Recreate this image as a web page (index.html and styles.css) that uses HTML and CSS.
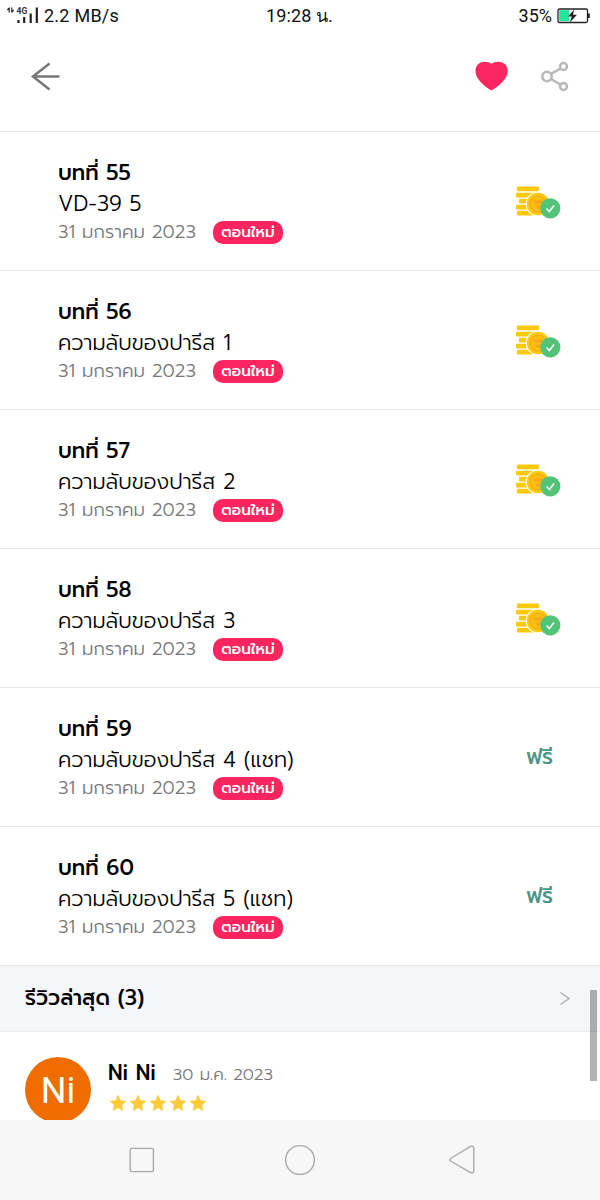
FILE: index.html
```html
<!DOCTYPE html>
<html lang="th">
<head>
  <meta charset="UTF-8" />
  <meta name="viewport" content="width=device-width, initial-scale=1" />
  <title>รายการตอน</title>
  <link rel="stylesheet" href="styles.css">
</head>
<body>
  <!-- Reusable icons -->
  <svg class="sprite" aria-hidden="true">
    <symbol id="coins" viewBox="0 0 46 34">
      <g fill="#fbc90c">
        <rect x="2" y=".5" width="22" height="4.800" rx="1" />
        <rect x="1" y="6.700" width="23" height="4.800" rx="1" />
        <rect x="4" y="12.700" width="20" height="4.800" rx="1" />
        <rect x="1" y="18.700" width="20" height="4.800" rx="1" />
        <rect x="2" y="24.700" width="22" height="4.800" rx="1" />
      </g>
      <circle cx="23" cy="18" r="12.300" fill="#fff" />
      <circle cx="23" cy="18" r="11.200" fill="#fdc90d" />
      <circle cx="23" cy="18" r="8" fill="#fcbf0d" stroke="#f3a712" stroke-width="1.100" />
      <path d="M18 14.500h10l-1.500 3h-7zM20 19.500h6l-3 4z" fill="#f7a51c" />
      <circle cx="35.300" cy="22.300" r="10.100" fill="#52c477" />
      <path d="M31.600 22.500l2.700 3 4.800-6" fill="none" stroke="#fff" stroke-width="1.500" />
    </symbol>
    <symbol id="star" viewBox="0 0 20 20">
      <path d="M10 1.600l2.500 5.700 6 .6-4.500 4.100 1.300 6L10 14.900 4.700 18 6 12 1.500 7.900l6-.6z" fill="#ffca38" />
    </symbol>
  </svg>

  <div class="status-bar">
    <div class="status-left">
      <svg class="signal" width="32" height="18" viewBox="0 0 32 18">
        <path d="M2.200 .5v5M.4 3l1.800-2M4.800 .5v5M6.600 3l-1.800 2" fill="none" stroke="#222" stroke-width="1.200" />
        <text x="9.500" y="7">4G</text>
        <path d="M11.500 13v3M17.200 10v6M23.700 6.500v9.500M29.800 .5v15.500" stroke="#222" stroke-width="2.200" />
      </svg>
      <span class="speed">2.2 MB/s</span>
    </div>
    <div class="clock">19:28 น.</div>
    <div class="status-right">
      <span class="percent">35%</span>
      <svg width="34" height="16" viewBox="0 0 34 16">
        <rect x="1" y="1" width="29.500" height="13.500" rx="1.500" fill="#fff" stroke="#222" stroke-width="1.300" />
        <rect x="2.200" y="2.200" width="10" height="11" fill="#20e79b" />
        <path d="M31 5.500h1.800v4.500H31z" fill="#222" />
        <path d="M17.200 1.500L11 8.600h3.800l-2 5.800 7.200-7.600h-4z" fill="#222" />
      </svg>
    </div>
  </div>

  <header class="toolbar">
    <svg class="back" width="30" height="30" viewBox="0 0 30 30">
      <path d="M29.500 15.500H3M19.500 2.500L3 15.500l16.500 13" fill="none" stroke="#777" stroke-width="2.500" />
    </svg>
    <svg class="heart" width="34" height="31" viewBox="0 0 34 31">
      <path d="M16.500 29.400C13 27.500.5 19.500.5 10 .5 4.500 4.300.8 9.700.8c3 0 5.300.8 6.800 2.200C18 1.600 20.300.8 23.300.8c5.400 0 9.400 3.700 9.400 9.200C32.700 19.500 20 27.500 16.500 29.400z" fill="#fc255f" />
    </svg>
    <svg class="share" width="30" height="31" viewBox="0 0 30 31">
      <g fill="none" stroke="#b8b8b8" stroke-width="2.500">
        <path d="M11 12.800L20.300 7.600M11 18L20.300 23.500" />
        <circle cx="7" cy="15.500" r="4.700" />
        <circle cx="23.500" cy="5.500" r="3.500" />
        <circle cx="23.500" cy="25.500" r="3.500" />
      </g>
    </svg>
  </header>

  <main class="content">
    <ul class="chapters">
      <li class="chapter">
        <div class="chapter-info">
          <h3>บทที่ 55</h3>
          <p class="name">VD-39 5</p>
          <p class="meta"><span class="date">31 มกราคม 2023</span><span class="badge">ตอนใหม่</span></p>
        </div>
        <svg class="coins"><use href="#coins" /></svg>
      </li>
      <li class="chapter">
        <div class="chapter-info">
          <h3>บทที่ 56</h3>
          <p class="name">ความลับของปารีส 1</p>
          <p class="meta"><span class="date">31 มกราคม 2023</span><span class="badge">ตอนใหม่</span></p>
        </div>
        <svg class="coins"><use href="#coins" /></svg>
      </li>
      <li class="chapter">
        <div class="chapter-info">
          <h3>บทที่ 57</h3>
          <p class="name">ความลับของปารีส 2</p>
          <p class="meta"><span class="date">31 มกราคม 2023</span><span class="badge">ตอนใหม่</span></p>
        </div>
        <svg class="coins"><use href="#coins" /></svg>
      </li>
      <li class="chapter">
        <div class="chapter-info">
          <h3>บทที่ 58</h3>
          <p class="name">ความลับของปารีส 3</p>
          <p class="meta"><span class="date">31 มกราคม 2023</span><span class="badge">ตอนใหม่</span></p>
        </div>
        <svg class="coins"><use href="#coins" /></svg>
      </li>
      <li class="chapter">
        <div class="chapter-info">
          <h3>บทที่ 59</h3>
          <p class="name">ความลับของปารีส 4 (แชท)</p>
          <p class="meta"><span class="date">31 มกราคม 2023</span><span class="badge">ตอนใหม่</span></p>
        </div>
        <span class="free">ฟรี</span>
      </li>
      <li class="chapter">
        <div class="chapter-info">
          <h3>บทที่ 60</h3>
          <p class="name">ความลับของปารีส 5 (แชท)</p>
          <p class="meta"><span class="date">31 มกราคม 2023</span><span class="badge">ตอนใหม่</span></p>
        </div>
        <span class="free">ฟรี</span>
      </li>
    </ul>

    <div class="reviews-head">
      <h2>รีวิวล่าสุด (3)</h2>
      <svg width="12" height="16" viewBox="0 0 12 16">
        <path d="M1.500 1.500l8.500 6-8.500 6" fill="none" stroke="#b0b0b2" stroke-width="1.500" />
      </svg>
    </div>

    <div class="review">
      <div class="avatar">Ni</div>
      <div class="review-body">
        <p class="review-top"><span class="author">Ni Ni</span><span class="review-date">30 ม.ค. 2023</span></p>
        <div class="stars">
          <svg><use href="#star" /></svg>
          <svg><use href="#star" /></svg>
          <svg><use href="#star" /></svg>
          <svg><use href="#star" /></svg>
          <svg><use href="#star" /></svg>
        </div>
      </div>
    </div>
    <div class="scrollbar"></div>
  </main>

  <nav class="nav-bar">
    <svg width="28" height="32" viewBox="0 0 28 32">
      <rect x="2.200" y="4.400" width="23.200" height="23.200" rx="1.500" />
    </svg>
    <svg width="32" height="32" viewBox="0 0 32 32">
      <circle cx="16" cy="16" r="14.400" />
    </svg>
    <svg width="28" height="32" viewBox="0 0 28 32">
      <path d="M2.500 14.500L22.500 2.500Q25.600 1.200 25.800 4.500V26.500Q25.600 29.800 22.500 28.500L2.500 17Q.8 15.800 2.500 14.500z" />
    </svg>
  </nav>
</body>
</html>
```

FILE: styles.css
```css
* {
  box-sizing: border-box;
}

body {
  margin: 0;
  width: 600px;
  height: 1200px;
  display: flex;
  flex-direction: column;
  overflow: hidden;
  background: #fff;
  color: #000;
  font-family: Prompt, Inter, "Noto Sans", sans-serif;
}

h2, h3, p, ul {
  margin: 0;
  padding: 0;
  list-style: none;
}

.sprite {
  position: absolute;
  width: 0;
  height: 0;
}

/* Status bar */
.status-bar {
  height: 31px;
  flex: none;
  display: grid;
  grid-template-columns: 1fr auto 1fr;
  align-items: center;
  padding: 0 9px 0 7px;
  font: 18px/31px Roboto, sans-serif;
  color: #111;
}

.status-left, .status-right {
  display: flex;
  align-items: center;
}

.status-left {
  gap: 5px;
}

.speed {
  letter-spacing: 0.25px;
}

.clock {
  padding-left: 1px;
  letter-spacing: 0.1px;
}

.status-right {
  justify-content: flex-end;
  gap: 5px;
}

.signal text {
  font: bold 8.5px Roboto, sans-serif;
  fill: #333;
}

/* Toolbar */
.toolbar {
  height: 100px;
  flex: none;
  display: flex;
  align-items: center;
  padding: 0 30px 10px;
}

.back {
  margin-right: auto;
}

.heart {
  margin-right: 31px;
}

/* Chapter list */
.content {
  position: relative;
  flex: 1;
  min-height: 0;
  overflow: hidden;
}

.chapter {
  height: 139px;
  display: flex;
  justify-content: space-between;
  padding: 26px 39px 0 58px;
  border-top: 1px solid #e8e8e8;
}

.chapter h3 {
  font-size: 21.2px;
  line-height: 31px;
  font-weight: 500;
  white-space: nowrap;
}

.name {
  font-size: 21.15px;
  line-height: 30px;
  font-weight: 300;
  white-space: nowrap;
}

.meta {
  display: flex;
  align-items: center;
  height: 26px;
  color: #777;
  font-size: 18.4px;
  font-weight: 300;
}

.date {
  width: 155px;
  white-space: nowrap;
}

.badge {
  width: 70px;
  height: 23px;
  border-radius: 10px;
  background: #fc255f;
  color: #fff;
  font-size: 15.2px;
  line-height: 21px;
  font-weight: 500;
  text-align: center;
  white-space: nowrap;
}

.coins {
  width: 46px;
  height: 34px;
  margin-top: 28px;
}

.free {
  margin: 28px 8px 0 0;
  color: #4a9584;
  font-size: 21.2px;
  line-height: 30px;
  font-weight: 500;
}

/* Reviews */
.reviews-head {
  height: 67px;
  display: flex;
  align-items: center;
  justify-content: space-between;
  padding: 0 29px 0 25px;
  background: #f5f6f9;
  border-top: 1px solid #e8e8e8;
  border-bottom: 1px solid #ebebeb;
}

.reviews-head h2 {
  padding-bottom: 2px;
  font-size: 21.1px;
  line-height: 30px;
  font-weight: 500;
}

.review {
  display: flex;
  gap: 17px;
  padding: 25px 25px 0;
}

.avatar {
  width: 66px;
  height: 66px;
  border-radius: 50%;
  background: #ef6c00;
  color: #fff;
  font: 36px/68px Roboto, sans-serif;
  text-align: center;
}

.review-top {
  display: flex;
  align-items: baseline;
  gap: 17px;
  height: 36px;
  line-height: 33px;
}

.author {
  font-size: 21px;
  font-weight: 500;
}

.review-date {
  color: #777;
  font-size: 16.7px;
  font-weight: 300;
}

.stars {
  display: flex;
}

.stars svg {
  width: 20px;
  height: 20px;
}

.scrollbar {
  position: absolute;
  top: 859px;
  right: 3px;
  width: 7px;
  height: 91px;
  background: rgba(0, 0, 0, 0.3);
}

/* System navigation */
.nav-bar {
  height: 80px;
  flex: none;
  display: flex;
  align-items: center;
  justify-content: space-between;
  padding: 0 124px 0 128px;
  background: #f7f7f7;
}

.nav-bar svg {
  fill: none;
  stroke: #aaa;
  stroke-width: 1.4;
}

.nav-bar svg:nth-child(2) {
  margin-right: 4px;
}
```
